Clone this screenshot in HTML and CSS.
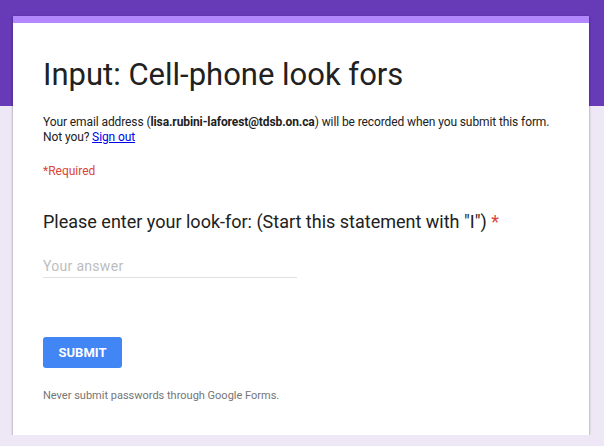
FILE: index.html
```html
<!DOCTYPE html>
<html lang="en">
<head>
  <meta charset="UTF-8">
  <meta name="viewport" content="width=device-width, initial-scale=1.0">
  <title>Input: Cell-phone look fors</title>
  <link rel="stylesheet" href="styles.css">
</head>
<body>
  <div class="header-band"></div>
  <div class="page">
    <div class="card">
      <div class="card-accent"></div>
      <div class="card-body">
        <h1 class="form-title">Input: Cell-phone look fors</h1>
        <p class="email-note">Your email address (<b>lisa.rubini-laforest@tdsb.on.ca</b>) will be recorded when you submit this form. Not you? <a href="#">Sign out</a></p>
        <p class="required-note">*Required</p>

        <div class="question">
          <div class="question-title">Please enter your look-for: (Start this statement with "I") <span class="star">*</span></div>
          <input type="text" class="answer" placeholder="Your answer">
        </div>

        <button type="button" class="submit-btn">SUBMIT</button>
        <p class="footer-note">Never submit passwords through Google Forms.</p>
      </div>
    </div>
  </div>
</body>
</html>
```

FILE: styles.css
```css
body {
  margin: 0;
  padding: 0;
  font-family: Roboto, Arial, sans-serif;
  background-color: #ede7f6;
  color: #212121;
}

.header-band {
  background-color: #673ab7;
  height: 106px;
}

.page {
  margin-top: -90px;
  padding: 0 15px 0 13px;
}

.card {
  background-color: #fff;
  box-shadow: 0 1px 2px rgba(0, 0, 0, 0.3), 0 1px 3px rgba(0, 0, 0, 0.15);
}

.card-accent {
  background-color: #b388ff;
  height: 7px;
}

.card-body {
  padding: 32px 30px 32px 30px;
}

.form-title {
  margin: 0;
  font-size: 31px;
  font-weight: 400;
  line-height: 40px;
  color: #212121;
}

.email-note {
  margin: 20px 0 0 0;
  font-size: 12px;
  line-height: 15px;
  letter-spacing: -0.1px;
  color: #212121;
}

.email-note a {
  color: #0000ee;
}

.required-note {
  margin: 19px 0 0 0;
  font-size: 12px;
  line-height: 15px;
  color: #db4437;
}

.question {
  margin-top: 31px;
}

.question-title {
  font-size: 18px;
  line-height: 24px;
  color: #212121;
}

.star {
  color: #db4437;
}

.answer {
  display: block;
  margin-top: 23px;
  width: 254px;
  padding: 0 0 2px 0;
  border: none;
  border-bottom: 1px solid #e0e0e0;
  font-family: Roboto, Arial, sans-serif;
  font-size: 14px;
  line-height: 18px;
  color: #212121;
  outline: none;
}

.answer::placeholder {
  color: #bdbdbd;
  letter-spacing: 0.3px;
}

.submit-btn {
  display: block;
  margin-top: 59px;
  width: 79px;
  height: 31px;
  background-color: #4285f4;
  color: #fff;
  border: none;
  border-radius: 3px;
  font-family: Roboto, Arial, sans-serif;
  font-size: 13px;
  font-weight: 700;
  cursor: pointer;
}

.footer-note {
  margin: 21px 0 0 0;
  font-size: 11px;
  line-height: 14px;
  color: #757575;
}
```
